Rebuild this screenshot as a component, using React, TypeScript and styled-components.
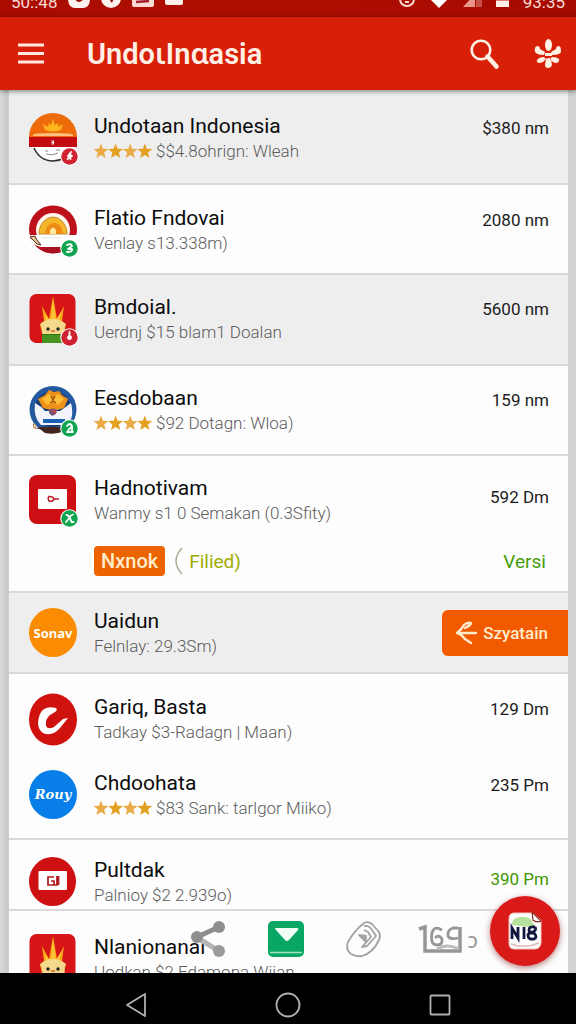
import React from "react";
import styled, { createGlobalStyle } from "styled-components";

const Global = createGlobalStyle`
  * { box-sizing: border-box; }
  body { margin: 0; font-family: Roboto, "Noto Sans", sans-serif; color: #111; background: #000; }
  button { font: inherit; border: 0; padding: 0; background: none; color: inherit; cursor: pointer; }
  svg { display: block; overflow: visible; }
`;

const Screen = styled.div`
  display: flex;
  flex-direction: column;
  height: 100vh;
  overflow: hidden;
  background: #d3d3d5;
`;

const StatusBar = styled.div`
  flex: none;
  height: 17px;
  display: flex;
  justify-content: space-between;
  align-items: flex-end;
  overflow: hidden;
  padding: 0 11px 9px;
  background: linear-gradient(90deg, #aa0c00, #ae0e00 50%, #a50a00);
  color: #f9dcd6;
  font-size: 17px;
  line-height: 20px;
`;

const StatusGroup = styled.div<{ $gap: number }>`
  display: flex;
  align-items: flex-end;
  gap: ${(p) => p.$gap}px;
`;

const StatusText = styled.span`
  margin-bottom: -4px;
`;

const AppBar = styled.header`
  flex: none;
  height: 73px;
  display: flex;
  align-items: center;
  padding: 0 15px 0 18px;
  background: #d82009;
  color: #fff0e6;
  box-shadow: 0 1px 5px rgba(0, 0, 0, 0.5);
  z-index: 1;
`;

const AppTitle = styled.h1`
  flex: 1;
  margin: 0 0 0 43px;
  font-size: 29px;
  font-weight: 600;
  line-height: 36px;
`;

const BarActions = styled.div`
  display: flex;
  align-items: center;
  gap: 36px;
`;

const Content = styled.main`
  flex: 1;
  min-height: 0;
  position: relative;
  display: flex;
  padding: 0 8px 0 9px;
  background: linear-gradient(90deg, #d9d9db, #c8c8ca 8px, #d3d3d5 9px);
`;

const List = styled.ul`
  flex: 1;
  min-width: 0;
  margin: 0;
  padding: 0;
  list-style: none;
  overflow: hidden;
  background: #fdfdfd;
`;

const Row = styled.li<{ $h: number; $top: number; $shade?: boolean; $line?: boolean; $flush?: boolean }>`
  display: flex;
  align-items: flex-start;
  min-height: ${(p) => p.$h}px;
  padding: ${(p) => p.$top}px ${(p) => (p.$flush ? 0 : 19)}px 0 20px;
  background: ${(p) => (p.$shade ? "#eeeeef" : "#fdfdfd")};
  border-bottom: ${(p) => (p.$line ? "2px solid #d9d9da" : "0")};
`;

const IconBox = styled.div`
  flex: none;
  width: 48px;
  height: 48px;
  margin-right: 17px;
`;

const Body = styled.div`
  flex: 1;
  min-width: 0;
`;

const Title = styled.h2`
  margin: 0;
  font-size: 21px;
  font-weight: 400;
  line-height: 27px;
  color: #0c0c0c;
  white-space: nowrap;
`;

const Sub = styled.p`
  margin: 0;
  display: flex;
  align-items: center;
  gap: 4px;
  font-size: 17px;
  font-weight: 300;
  line-height: 23px;
  color: #5c5c5c;
  white-space: nowrap;
`;

const Value = styled.span<{ $low?: boolean; $green?: boolean }>`
  font-size: 17px;
  line-height: 30px;
  padding-top: ${(p) => (p.$low ? 7 : 0)}px;
  color: ${(p) => (p.$green ? "#3f9600" : "#1c1c1c")};
  white-space: nowrap;
`;

const Actions = styled.div`
  display: flex;
  align-items: center;
  margin-top: 20px;
  height: 32px;
`;

const Side = styled.div`
  display: flex;
  flex-direction: column;
  align-items: flex-end;
  gap: 36px;
`;

const Filled = styled.button`
  height: 30px;
  padding: 0 7px;
  border-radius: 4px;
  background: #ed6300;
  color: #ffeccb;
  font-size: 20px;
  font-weight: 500;
`;

const Outline = styled.button`
  display: flex;
  align-items: center;
  gap: 6px;
  margin-left: 10px;
  color: #a0ac00;
  font-size: 19px;
`;

const Link = styled.a`
  margin-right: 3px;
  color: #479d08;
  font-size: 19px;
  line-height: 28px;
  text-decoration: none;
`;

const Swipe = styled.button`
  display: flex;
  align-items: center;
  gap: 6px;
  height: 46px;
  padding: 0 20px 0 13px;
  margin-top: 2px;
  border-radius: 6px 0 0 6px;
  background: #f25a00;
  color: #ffeacb;
  font-size: 17px;
  font-weight: 500;
`;

const Dock = styled.div`
  position: absolute;
  left: 0;
  right: 0;
  bottom: 5px;
  display: flex;
  align-items: center;
  justify-content: flex-end;
  padding-right: 16px;
`;

const DockTools = styled.div`
  display: flex;
  align-items: center;
  gap: 42px;
  margin-right: 12px;
  padding-top: 14px;
`;

const Counter = styled.button`
  display: flex;
  align-items: center;
  gap: 5px;
  margin-left: -6px;
  color: #999;
  font-size: 22px;
`;

const Fab = styled.button`
  display: flex;
  align-items: center;
  justify-content: center;
  width: 70px;
  height: 70px;
  margin-bottom: 2px;
  border-radius: 50%;
  background: #da1a19;
  box-shadow: 0 2px 6px rgba(120, 0, 0, 0.5);
`;

const NavBar = styled.nav`
  flex: none;
  height: 51px;
  display: flex;
  align-items: center;
  justify-content: center;
  gap: 128px;
  padding-top: 12px;
  background: #000;
`;

function Stars() {
  return (
    <svg width="58" height="15" viewBox="0 0 58 15" role="img" aria-label="4 stars">
      {[0, 1, 2, 3].map((i) => (
        <path
          key={i}
          transform={`translate(${i * 14.6} 0)`}
          fill={i % 2 ? "#e3a021" : "#e8ab48"}
          d="M7 -.5l2 5.200 5.400.3-4.200 3.500 1.400 5.500L7 11.100l-4.600 2.900 1.400-5.500L-.4 5l5.400-.3z"
        />
      ))}
    </svg>
  );
}

function Badge({ color, kind }: { color: string; kind: string }) {
  const marks: Record<string, string> = {
    four: "M42 39l-3 4h4M41.500 41v5M38.500 46l2-1.500",
    three: "M38 40q4-2 5 1l-4 3h4q1 3-5 3",
    drop: "M40.500 38v6M39.500 42.500a1.500 1.500 0 1 0 2 0",
    two: "M38 41q3-4 5 0l-5 6h6M40 44l3-2v5",
    cross: "M37.500 40q3 0 5 7h2M44 39.500q-3 1-4 4l-3 3.500",
  };
  return (
    <g>
      <circle cx="40.500" cy="43.500" r="9.300" fill="#fff" />
      <circle cx="40.500" cy="43.500" r="8.200" fill={color} />
      <path d={marks[kind]} fill="none" stroke="#fff" strokeWidth="1.800" strokeLinecap="round" strokeLinejoin="round" />
    </g>
  );
}

const RED = "#cf2331";
const GREEN = "#0fa44e";

function Crown({ badge }: { badge?: boolean }) {
  return (
    <svg width="48" height="49" viewBox="0 0 48 49">
      <rect x=".5" y="0" width="46" height="49" rx="7" fill="#d51518" />
      <path d="M11 31l4-4-2-15 7 13L24 2l4 23 7-13-2 15 4 4-3 8H13z" fill="#f7a516" />
      <path d="M22 27l2-21 3 20 5-8-2 12h-12l-3-10z" fill="#ffc43b" />
      <path d="M11 30q13-10 26 0-2 3-1 12H13q1-8-2-12z" fill="#f5d88c" />
      <circle cx="19" cy="35" r="1.700" fill="#222" />
      <circle cx="29" cy="35" r="1.700" fill="#222" />
      <path d="M22 37h4" stroke="#c96a2c" strokeWidth="1.500" />
      <path d="M13 40h22v9H13z" fill="#489322" />
      <path d="M13 40.500h22" stroke="#2e7414" strokeWidth="1" />
      {badge !== false && <Badge color={RED} kind="drop" />}
    </svg>
  );
}

function SunMask() {
  return (
    <svg width="48" height="49" viewBox="0 0 48 49">
      <circle cx="24" cy="24.500" r="23" fill="#fff" />
      <path d="M5 35q6 13 19 13 6 0 11-3" fill="none" stroke="#33292b" strokeWidth="1.600" />
      <path d="M0 24a24 24 0 0 1 48 0z" fill="#ee6b0c" />
      <path d="M16 17l-2-6 5 3 1-4 2 2 2-6 2 6 3-2 0 4 5-3-2 6q-8 3-16 0z" fill="#ffb51d" />
      <path d="M4 22q0-2 20-2t20 2v1H4z" fill="#ffc27d" />
      <path d="M0 24h48v10H0z" fill="#c30c12" />
      <path d="M22.500 28h2v3h-2M24.500 29.500h-2" stroke="#fff" strokeWidth="1" fill="none" />
      <path d="M16 38h3M27 37h4M17 41q7 2 12-1" stroke="#888" strokeWidth="1" fill="none" />
      <Badge color={RED} kind="four" />
    </svg>
  );
}

function Arch() {
  return (
    <svg width="48" height="49" viewBox="0 0 48 49">
      <circle cx="24" cy="24.500" r="24" fill="#bd101a" />
      <circle cx="24" cy="25" r="17" fill="#fff5ec" />
      <path d="M10 29a14 17 0 0 1 28 0z" fill="#f4b82a" stroke="#b97c26" strokeWidth=".8" />
      <path d="M16 29a9 11 0 0 1 18 0z" fill="#ee8a16" />
      <path d="M21 29v-4q3-5 6 0v4z" fill="#ffe79c" />
      <path d="M1 30h47v8q-3 4-12 4H12q-6-1-9-5z" fill="#fff" />
      <path d="M12 33h20" stroke="#e5e5e5" />
      <path d="M1 32l5-1 2 4 4 5-4-1-5-5z" fill="#e9c48c" stroke="#513224" strokeWidth="1" />
      <path d="M12 42h21l2 4q-10 4-19 1z" fill="#a91220" />
      <Badge color={GREEN} kind="three" />
    </svg>
  );
}

function BlueBird() {
  return (
    <svg width="48" height="49" viewBox="0 0 48 49">
      <circle cx="24" cy="24.500" r="23.500" fill="#2459a0" />
      <circle cx="24" cy="24" r="18" fill="#173b70" />
      <path d="M6 18q6 3 10 8h15l11-8q4 16-5 22H12Q4 32 6 18z" fill="#f4f5fc" />
      <path d="M9 14l7-4 4-5 5 2 5-1 3 4 6 4-4 9-10 3-11-3z" fill="#ee9118" />
      <path d="M13 14l7-5 4 4 5-4 6 5-6 6-5-3-6 3z" fill="#ffbd35" />
      <path d="M22 11l2 4 2-4M21 18l3-2 3 2" stroke="#9b4808" strokeWidth="1.300" fill="none" />
      <path d="M20 25q4-3 8 0l-1 4-4 2-3-3z" fill="#73517a" />
      <path d="M23 26q3-1 4 2" stroke="#d73e37" strokeWidth="1.600" fill="none" />
      <path d="M14 34h22v4H14z" fill="#1862b3" />
      <path d="M4 38l3 5 5-1h21v5q-9 3-17 1l-5-4-7-1z" fill="#43251f" />
      <path d="M5 38l3 4-4 1z" fill="#f9d396" />
      <Badge color={GREEN} kind="two" />
    </svg>
  );
}

function CardSquare() {
  return (
    <svg width="48" height="49" viewBox="0 0 48 49">
      <rect x="0" y="0" width="47" height="49" rx="8" fill="#cd0f13" />
      <rect x="9" y="14" width="29" height="20" rx="1" fill="#fff" />
      <path d="M21 21q-3 1-1 5 4 1 5-2-1-3-4-2M25 24h5" stroke="#b91d24" strokeWidth="1.600" fill="none" />
      <Badge color={GREEN} kind="cross" />
    </svg>
  );
}

const WordMark = styled.div<{ $bg: string; $serif?: boolean }>`
  display: flex;
  align-items: center;
  justify-content: center;
  width: 48px;
  height: 49px;
  border-radius: 50%;
  background: ${(p) => p.$bg};
  color: #fff;
  font-family: ${(p) => (p.$serif ? '"DejaVu Serif", serif' : '"Noto Sans", sans-serif')};
  font-style: ${(p) => (p.$serif ? "italic" : "normal")};
  font-size: 13px;
  font-weight: 700;
`;

function RedSwirl() {
  return (
    <svg width="48" height="51" viewBox="0 0 48 51">
      <ellipse cx="24" cy="25.500" rx="24" ry="26" fill="#d0120f" />
      <path d="M27 14q-12-3-16 6-5 13 3 19 9 4 17-5l8-10-5 1-9 8q-6 3-8-1-1-7 4-11l5-3q3-2 1-4z" fill="#fff" />
    </svg>
  );
}

function CardRound() {
  return (
    <svg width="48" height="49" viewBox="0 0 48 49">
      <ellipse cx="23.500" cy="24.500" rx="23.500" ry="24.500" fill="#cf1013" />
      <rect x="9.500" y="14" width="28.500" height="19" rx="1" fill="#fff" />
      <path d="M25 20h-6v8h6v-4h-3M28 19v9h-3M29.500 19v9" stroke="#ae171e" strokeWidth="1.700" fill="none" />
    </svg>
  );
}

type Item = {
  icon: React.ReactNode;
  title: string;
  sub: string;
  stars?: boolean;
  value?: string;
  green?: boolean;
  low?: boolean;
  h: number;
  top: number;
  shade?: boolean;
  line?: boolean;
  extra?: "actions" | "swipe";
};

const items: Item[] = [
  { icon: <SunMask />, title: "Undotaan Indonesia", sub: "$$4.8ohrign: Wleah", stars: true, value: "$380 nm", h: 95, top: 23, shade: true, line: true },
  { icon: <Arch />, title: "Flatio Fndovai", sub: "Venlay s13.338m)", value: "2080 nm", h: 90, top: 20, line: true },
  { icon: <Crown />, title: "Bmdoial.", sub: "Uerdnj $15 blam1 Doalan", value: "5600 nm", h: 91, top: 19, shade: true, line: true },
  { icon: <BlueBird />, title: "Eesdobaan", sub: "$92 Dotagn: Wloa)", stars: true, value: "159 nm", h: 90, top: 19, line: true },
  { icon: <CardSquare />, title: "Hadnotivam", sub: "Wanmy s1 0 Semakan (0.3Sfity)", value: "592 Dm", low: true, h: 137, top: 19, line: true, extra: "actions" },
  { icon: <WordMark $bg="#fb8b00">Sonav</WordMark>, title: "Uaidun", sub: "Felnlay: 29.3Sm)", h: 81, top: 15, shade: true, line: true, extra: "swipe" },
  { icon: <RedSwirl />, title: "Gariq, Basta", sub: "Tadkay $3-Radagn | Maan)", value: "129 Dm", h: 77, top: 20 },
  { icon: <WordMark $bg="#087fe8" $serif>Rouy</WordMark>, title: "Chdoohata", sub: "$83 Sank: tarlgor Miiko)", stars: true, value: "235 Pm", h: 89, top: 19, line: true },
  { icon: <CardRound />, title: "Pultdak", sub: "Palnioy $2 2.939o)", value: "390 Pm", green: true, low: true, h: 71, top: 17, line: true },
  { icon: <Crown badge={false} />, title: "Nlanionanaı", sub: "Uodkan $2 Fdamona Wiian", h: 90, top: 23 },
];

function Entry({ item }: { item: Item }) {
  const value = item.value && (
    <Value $low={item.low} $green={item.green}>
      {item.value}
    </Value>
  );
  return (
    <Row $h={item.h} $top={item.top} $shade={item.shade} $line={item.line} $flush={item.extra === "swipe"}>
      <IconBox>{item.icon}</IconBox>
      <Body>
        <Title>{item.title}</Title>
        <Sub>
          {item.stars && <Stars />}
          {item.sub}
        </Sub>
        {item.extra === "actions" && (
          <Actions>
            <Filled>Nxnok</Filled>
            <Outline>
              <svg width="8" height="28" viewBox="0 0 8 28">
                <path d="M7 1Q-5 14 7 27" fill="none" stroke="#a5a58c" strokeWidth="1.300" />
              </svg>
              Filied)
            </Outline>
          </Actions>
        )}
      </Body>
      {item.extra === "actions" ? (
        <Side>
          {value}
          <Link href="#versi">Versi</Link>
        </Side>
      ) : item.extra === "swipe" ? (
        <Swipe>
          <svg width="22" height="24" viewBox="0 0 22 24" fill="none" stroke="#ffeacb" strokeWidth="2.400" strokeLinecap="round" strokeLinejoin="round">
            <path d="M21 12H2Q7 8 9 4q3-3 7-2-1 3-6 5M2 12q4 1 8 6l6 4" />
          </svg>
          Szyatain
        </Swipe>
      ) : (
        value
      )}
    </Row>
  );
}

export default function App() {
  return (
    <>
      <Global />
      <Screen>
        <StatusBar>
          <StatusGroup $gap={11}>
            <StatusText>50::48</StatusText>
            <svg width="22" height="18" viewBox="0 0 22 18">
              <path d="M0 0h22v10q-1 8-7 8H7q-6 0-7-8z" fill="#fff3ef" />
              <path d="M8 8q2 5 6 1V6" stroke="#920a00" strokeWidth="2.500" fill="none" />
            </svg>
            <svg width="20" height="18" viewBox="0 0 20 18">
              <circle cx="10" cy="8" r="10" fill="#fff3ef" />
              <path d="M8 9l3 4 2-5" fill="#920a00" />
            </svg>
            <svg width="22" height="18" viewBox="0 0 22 18">
              <rect y="0" width="22" height="17" rx="2" fill="#fbdad3" />
              <path d="M4 12l13-1" stroke="#a2202a" strokeWidth="2.500" />
            </svg>
            <svg width="18" height="18" viewBox="0 0 18 18">
              <rect y="0" width="18" height="15" rx="2" fill="#fff0ec" />
            </svg>
          </StatusGroup>
          <StatusGroup $gap={14}>
            <svg width="16" height="18" viewBox="0 0 16 18" fill="none" stroke="#fbdad3" strokeWidth="2">
              <circle cx="8" cy="9" r="7" />
              <path d="M5 9h2M9 9h2M6 12h4" />
            </svg>
            <svg width="20" height="18" viewBox="0 0 20 18">
              <path d="M0 8q10-8 20 0l-10 10z" fill="#fff" />
            </svg>
            <svg width="19" height="18" viewBox="0 0 19 18">
              <path d="M0 17L12 4v13z" fill="#e8958b" />
              <path d="M13 4h6v13h-6z" fill="#c65148" />
            </svg>
            <svg width="13" height="18" viewBox="0 0 13 18">
              <path d="M0 0h13v17H0z" fill="#fff0ec" />
              <path d="M0 9h13v2H0z" fill="#dc8179" />
            </svg>
            <StatusText>93:35</StatusText>
          </StatusGroup>
        </StatusBar>
        <AppBar>
          <button aria-label="Menu">
            <svg width="26" height="22" viewBox="0 0 26 22" stroke="#ffe9df" strokeWidth="2.800">
              <path d="M0 2h26M0 10.500h26M0 19h26" />
            </svg>
          </button>
          <AppTitle>UndoɩInɑasia</AppTitle>
          <BarActions>
            <button aria-label="Search">
              <svg width="29" height="30" viewBox="0 0 29 30" fill="none" stroke="#fff1e4">
                <circle cx="11" cy="11" r="9.300" strokeWidth="2.600" />
                <path d="M17.500 17.500l9 10" strokeWidth="4.500" strokeLinecap="round" />
              </svg>
            </button>
            <button aria-label="Settings">
              <svg width="26" height="29" viewBox="0 0 26 29" fill="#fff1e4">
                <ellipse cx="13.500" cy="6" rx="3.500" ry="6" />
                <path d="M2 7q3 0 3 3l5 3-1 3Q2 16 0 13q-1-5 2-6zM24 7q-3 0-3 3l-5 3 1 3q8 0 9-3 0-6-2-6zM9 18l2 2q-2 3-6 4-4 0-3-3 2-3 7-3zM17 18l-2 2q3 4 6 4 4-1 3-4-2-2-7-2zM11 20q3-2 5 0l1 6q-1 3-4 3t-3-3z" />
                <path d="M10 14h7v3h-7z" />
              </svg>
            </button>
          </BarActions>
        </AppBar>
        <Content>
          <List>
            {items.map((item) => (
              <Entry key={item.title} item={item} />
            ))}
          </List>
          <Dock>
            <DockTools>
              <button aria-label="Share">
                <svg width="35" height="36" viewBox="0 0 35 36">
                  <path d="M28 6L6 16" stroke="#8e8e8e" strokeWidth="5" />
                  <path d="M10 19l18 11" stroke="#b5b5b5" strokeWidth="5" />
                  <circle cx="28" cy="6" r="6" fill="#8e8e8e" />
                  <circle cx="6" cy="16" r="6" fill="#8e8e8e" />
                  <circle cx="28" cy="30" r="6" fill="#9a9a9a" />
                </svg>
              </button>
              <button aria-label="Download">
                <svg width="36" height="36" viewBox="0 0 36 36">
                  <rect width="36" height="36" rx="5" fill="#0aa764" />
                  <path d="M8 7h21q2 0 1 2l-9 10q-2 2-4 0L8 9q-2-2 0-2z" fill="#f2fff6" />
                  <path d="M2 31.500h32" stroke="#9fe5c2" strokeWidth="1.500" />
                </svg>
              </button>
              <button aria-label="Attach">
                <svg width="36" height="36" viewBox="0 0 36 36" fill="none" stroke="#a3a3a3" strokeWidth="1.800" strokeLinejoin="round">
                  <path d="M2 21Q8 10 18 2q4-2 8 1l7 8q2 4 0 8-6 13-17 16-6 1-11-2-6-5-3-12z" />
                  <path d="M18 5q5-1 8 4l4 6-9 10-5 1 9-10-3-5-4-2" />
                  <path d="M13 14l7 1v6z" fill="#a3a3a3" />
                </svg>
              </button>
              <Counter aria-label="Counter">
                <svg width="44" height="28" viewBox="0 0 44 28" fill="none" stroke="#969696" strokeWidth="3.500">
                  <path d="M1 4l6-2v24h35V2" />
                  <path d="M24 5q-8-5-10 3-2 12 5 12 6 0 5-6-3-5-7-1M40 3h-5q-6 2-5 8 2 4 10 2" strokeWidth="2.800" />
                  <path d="M19 24q10-6 22 0" strokeWidth="2.800" stroke="#bdbdbd" />
                </svg>
                ɔ
              </Counter>
            </DockTools>
            <Fab aria-label="New note">
              <svg width="34" height="38" viewBox="0 0 34 38">
                <path d="M6 1h19l8 7v23q-1 6-6 6H6q-5 0-5-6V7q0-6 5-6z" fill="#fff" stroke="#efc5bd" />
                <path d="M4 13q0-8 9-8 10-1 12 6l3 5z" fill="#b6e19c" />
                <path d="M24 0l1 8q3 3 8 1z" fill="#fff" stroke="#8b2622" strokeWidth="1.200" />
                <path d="M3 32q14 5 28-1" stroke="#dab6b8" strokeWidth="1.500" fill="none" />
                <path d="M4 27V16l6 10V15M16 15v12M27 15q-6-1-6 3t5 3q4 4 0 6-6 1-6-4 1-3 5-3 4-2 2-5" stroke="#11173f" strokeWidth="2.800" fill="none" />
              </svg>
            </Fab>
          </Dock>
        </Content>
        <NavBar>
          <button aria-label="Back">
            <svg width="22" height="26" viewBox="0 0 22 26" fill="none" stroke="#b0b0b0" strokeWidth="1.800" strokeLinejoin="round">
              <path d="M20 2v22L2 13z" />
            </svg>
          </button>
          <button aria-label="Home">
            <svg width="26" height="26" viewBox="0 0 26 26" fill="none" stroke="#b0b0b0" strokeWidth="1.800">
              <circle cx="13" cy="13" r="11.500" />
            </svg>
          </button>
          <button aria-label="Recent apps">
            <svg width="22" height="22" viewBox="0 0 22 22" fill="none" stroke="#b0b0b0" strokeWidth="1.800">
              <rect x="1.500" y="1.500" width="19" height="19" rx="1" />
            </svg>
          </button>
        </NavBar>
      </Screen>
    </>
  );
}
